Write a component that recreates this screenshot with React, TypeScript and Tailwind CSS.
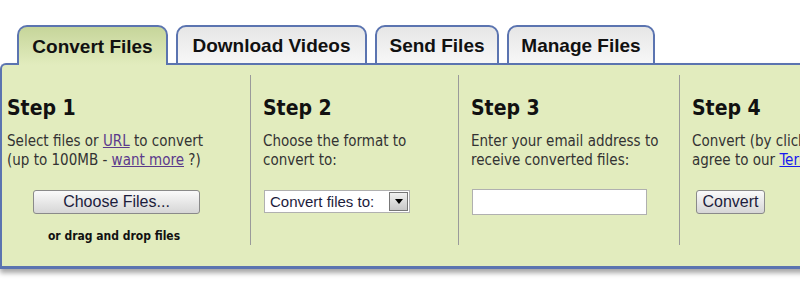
import * as React from "react";

const tabs = [
  { label: "Convert Files", w: "w-[151px]", active: true },
  { label: "Download Videos", w: "w-[191px]", active: false },
  { label: "Send Files", w: "w-[124px]", active: false },
  { label: "Manage Files", w: "w-[148px]", active: false },
];

const body = "font-['DejaVu_Sans_Condensed','DejaVu_Sans',sans-serif]";
const arial = "font-['Liberation_Sans',Arial,sans-serif]";

function Heading({ children }: { children: React.ReactNode }) {
  return (
    <h2 className={`${body} text-[21px] leading-[24px] font-bold text-[#111]`}>{children}</h2>
  );
}

function GrayButton({ children, className }: { children: React.ReactNode; className?: string }) {
  return (
    <button
      className={`${arial} block h-[24px] rounded-[3px] border border-[#8a8a8a] bg-gradient-to-b from-[#fafafa] to-[#d6d6d6] text-[16px] leading-none text-[#1c1c3c] ${className ?? ""}`}
    >
      {children}
    </button>
  );
}

export default function App() {
  return (
    <div className="h-[300px] w-[800px] overflow-hidden bg-white pt-[25px]">
      <nav className="relative z-10 flex gap-[8px] pl-[17px]">
        {tabs.map((t) => (
          <div
            key={t.label}
            className={`${arial} ${t.w} -mb-[2px] flex h-[40px] items-center justify-center rounded-t-[10px] border-2 border-[#5b74b0] pt-[2px] text-[19px] font-bold text-[#111] ${
              t.active
                ? "border-b-0 bg-gradient-to-b from-[#c6d59a] to-[#e2ecbe]"
                : "bg-gradient-to-b from-[#e6e6e6] to-[#f7f7f7]"
            }`}
          >
            {t.label}
          </div>
        ))}
      </nav>

      <section className="w-[830px] rounded-tl-[6px] border-t-2 border-b-[3px] border-l-2 border-[#5b74b0] bg-[#e2ecbe] pt-[10px] pb-[21px] shadow-[0_4px_5px_rgba(0,0,0,0.35)]">
        <div className="flex h-[170px]">
          <div className="w-[249px] shrink-0 border-r border-[#9a9a9a] pl-[5px] pt-[21px]">
            <Heading>Step 1</Heading>
            <p className={`${body} mt-[12px] text-[15px] leading-[19px] text-[#333]`}>
              Select files or <a className="text-[#5b3a8c] underline">URL</a> to convert
              <br />
              (up to 100MB - <a className="text-[#5b3a8c] underline">want more</a> ?)
            </p>
            <GrayButton className="mt-[20px] ml-[26px] w-[167px]">Choose Files...</GrayButton>
            <p className={`${body} mt-[13px] ml-[32px] w-[150px] whitespace-nowrap text-center text-[12px] font-bold text-[#111]`}>
              or drag and drop files
            </p>
          </div>

          <div className="w-[208px] shrink-0 border-r border-[#9a9a9a] pl-[12px] pt-[21px]">
            <Heading>Step 2</Heading>
            <p className={`${body} mt-[12px] text-[15px] leading-[19px] text-[#333]`}>
              Choose the format to
              <br />
              convert to:
            </p>
            <div className="mt-[20px] ml-[1px] flex h-[23px] w-[146px] items-center border border-[#b0b0b0] bg-white">
              <span className={`${arial} flex-1 pl-[5px] text-[15px] leading-none text-[#1c1c3c]`}>
                Convert files to:
              </span>
              <span className="mr-[1px] flex h-[19px] w-[19px] items-center justify-center border border-[#777] bg-gradient-to-b from-[#f0f0f0] to-[#c8c8c8]">
                <svg width="8" height="5" viewBox="0 0 8 5">
                  <path d="M0 0h8L4 5z" fill="#000" />
                </svg>
              </span>
            </div>
          </div>

          <div className="w-[221px] shrink-0 border-r border-[#9a9a9a] pl-[12px] pt-[21px]">
            <Heading>Step 3</Heading>
            <p className={`${body} mt-[12px] text-[15px] leading-[19px] text-[#333]`}>
              Enter your email address to
              <br />
              receive converted files:
            </p>
            <input
              type="text"
              className="mt-[19px] ml-[1px] block h-[26px] w-[175px] border border-[#b0b0b0] bg-white outline-none"
            />
          </div>

          <div className="min-w-0 flex-1 overflow-hidden pl-[12px] pt-[21px]">
            <Heading>Step 4</Heading>
            <p className={`${body} mt-[12px] whitespace-nowrap text-[15px] leading-[19px] text-[#333]`}>
              Convert (by clicking the button you
              <br />
              agree to our <a className="text-[#1a1aee] underline">Terms</a>)
            </p>
            <GrayButton className="mt-[20px] ml-[4px] w-[69px]">Convert</GrayButton>
          </div>
        </div>
      </section>
    </div>
  );
}
